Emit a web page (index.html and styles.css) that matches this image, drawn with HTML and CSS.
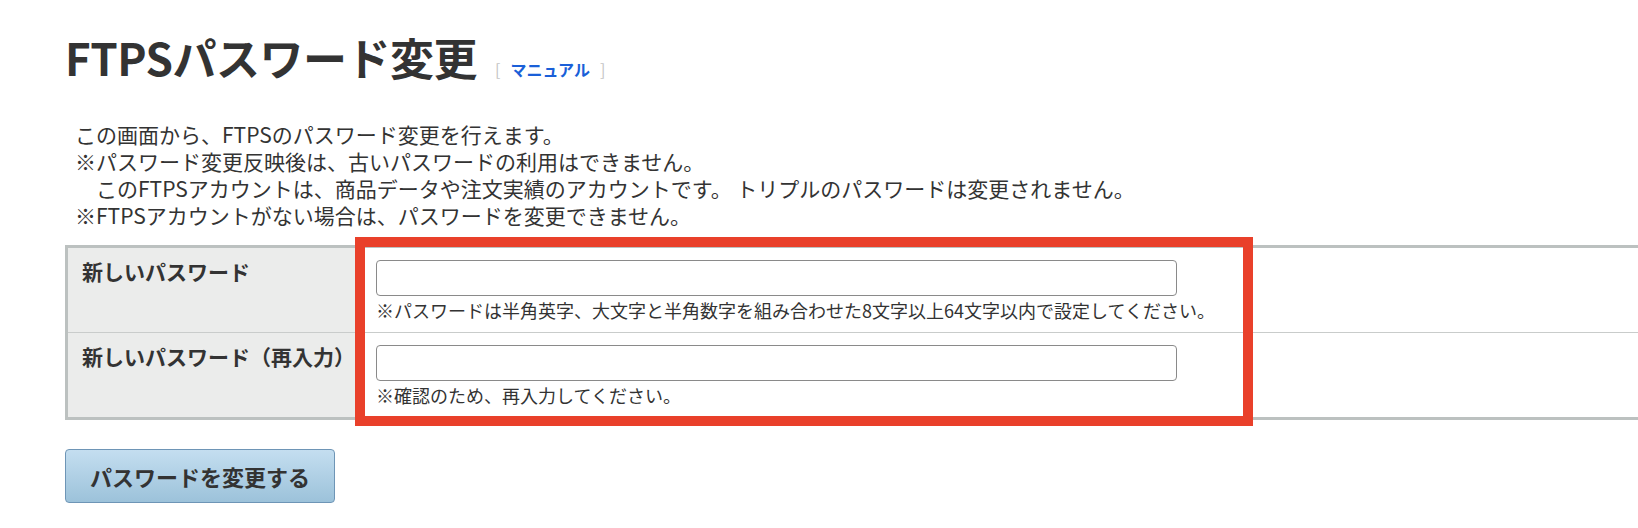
FILE: index.html
```html
<!DOCTYPE html>
<html lang="ja">
<head>
<meta charset="utf-8">
<title>FTPSパスワード変更</title>
<link rel="stylesheet" href="styles.css">
</head>
<body>
<div class="page">
  <div class="page-head">
    <h1 class="page-title">FTPSパスワード変更</h1>
    <span class="manual"><span class="bracket">[</span><a class="manual-link" href="#">マニュアル</a><span class="bracket">]</span></span>
  </div>

  <div class="intro">
    <p>この画面から、FTPSのパスワード変更を行えます。</p>
    <p>※パスワード変更反映後は、古いパスワードの利用はできません。</p>
    <p>　このFTPSアカウントは、商品データや注文実績のアカウントです。 トリプルのパスワードは変更されません。</p>
    <p>※FTPSアカウントがない場合は、パスワードを変更できません。</p>
  </div>

  <div class="form-wrap">
    <table class="form-table">
      <tr>
        <th>新しいパスワード</th>
        <td>
          <input class="field" type="password">
          <p class="hint">※パスワードは半角英字、大文字と半角数字を組み合わせた8文字以上64文字以内で設定してください。</p>
        </td>
      </tr>
      <tr>
        <th>新しいパスワード（再入力）</th>
        <td>
          <input class="field" type="password">
          <p class="hint">※確認のため、再入力してください。</p>
        </td>
      </tr>
    </table>
    <div class="highlight"></div>
  </div>

  <button class="submit" type="button">パスワードを変更する</button>
</div>
</body>
</html>
```

FILE: styles.css
```css
html, body {
  margin: 0;
  padding: 0;
  background: #fff;
  overflow-x: hidden;
}

body {
  font-family: "Hiragino Kaku Gothic ProN", "Noto Sans CJK JP", "Noto Sans", sans-serif;
  color: #333;
}

.page {
  padding: 30px 0 0 65px;
}

/* heading row */
.page-head {
  display: flex;
  align-items: baseline;
  gap: 18px;
}

.page-title {
  margin: 0;
  font-size: 44px;
  line-height: 54px;
  font-weight: 700;
  color: #333;
  letter-spacing: -0.5px;
}

.manual {
  font-size: 16px;
  display: inline-flex;
  align-items: baseline;
  gap: 10px;
}

.bracket {
  color: #c4c4c4;
  font-weight: 400;
}

.manual-link {
  color: #1a5fd8;
  font-weight: 700;
  text-decoration: none;
}

/* intro text */
.intro {
  margin-top: 37px;
  padding-left: 10px;
  font-size: 21px;
  line-height: 27px;
}

.intro p {
  margin: 0;
}

/* form table */
.form-wrap {
  position: relative;
  margin-top: 16px;
}

.form-table {
  width: calc(100% + 10px);
  border-collapse: collapse;
  border: 3px solid #bcc1c0;
}

.form-table th,
.form-table td {
  vertical-align: top;
  border-bottom: 1px solid #c9cccb;
}

.form-table th {
  width: 264px;
  background: #ebeceb;
  text-align: left;
  font-size: 21px;
  line-height: 28px;
  font-weight: 700;
  padding: 9px 14px 0;
  border-right: 1px solid #c9cccb;
}

.form-table td {
  background: #fff;
  padding: 12px 15px 10px;
  height: 60px;
}

.field {
  display: block;
  box-sizing: border-box;
  width: 801px;
  height: 36px;
  margin: 0;
  border: 1px solid #8a8a8a;
  border-radius: 4px;
  background: #fff;
}

.hint {
  margin: 2px 0 0;
  font-size: 18px;
  line-height: 24px;
}

/* red frame drawn over the input column */
.highlight {
  position: absolute;
  left: 290px;
  top: -8px;
  width: 898px;
  height: 189px;
  box-sizing: border-box;
  border: 10px solid #e9402a;
  pointer-events: none;
}

/* submit button */
.submit {
  display: block;
  margin-top: 29px;
  width: 270px;
  height: 54px;
  padding: 0;
  border: 1px solid #6e95b6;
  border-radius: 4px;
  background: linear-gradient(#c4def0, #9cc2da);
  font-family: inherit;
  font-size: 22px;
  font-weight: 700;
  color: #333;
}
```
